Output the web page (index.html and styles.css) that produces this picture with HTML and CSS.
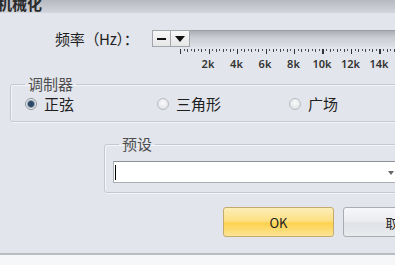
FILE: index.html
```html
<!DOCTYPE html>
<html>
<head>
    <meta charset="UTF-8">
    <title>机械化</title>
    <link rel="stylesheet" href="styles.css">
</head>
<body>
    <div class="dialog">
        <div class="caption"><span>机械化</span></div>

        <div class="freq-row">
            <span class="freq-label">频率（Hz）：</span>
            <div class="freq-control">
                <div class="freq-bar">
                    <button class="tiny-btn minus"><span></span></button>
                    <button class="tiny-btn drop"><span></span></button>
                    <div class="track"></div>
                </div>
                <div class="ticks"></div>
                <div class="scale">
                    <span>2k</span>
                    <span>4k</span>
                    <span>6k</span>
                    <span>8k</span>
                    <span>10k</span>
                    <span>12k</span>
                    <span>14k</span>
                </div>
            </div>
        </div>

        <fieldset class="group modulator">
            <legend>调制器</legend>
            <label class="radio checked"><i></i>正弦</label>
            <label class="radio"><i></i>三角形</label>
            <label class="radio"><i></i>广场</label>
        </fieldset>

        <fieldset class="group preset">
            <legend>预设</legend>
            <div class="combo">
                <span class="caret"></span>
                <span class="arrow"></span>
            </div>
        </fieldset>

        <div class="actions">
            <button class="btn ok">OK</button>
            <button class="btn">取消</button>
        </div>
    </div>
</body>
</html>
```

FILE: styles.css
```css
* {
    box-sizing: border-box;
}

body {
    margin: 0;
    width: 395px;
    height: 265px;
    overflow: hidden;
    background: #f6f7f9;
    font-family: "Noto Sans CJK SC", "Noto Sans", sans-serif;
    color: #1f1f1f;
}

.dialog {
    background: #e2e5eb;
    border-bottom: 2px solid #b9bdc3;
    padding-bottom: 16px;
}

/* title strip, cut off at the top of the shot */
.caption {
    height: 13px;
    overflow: hidden;
    background: linear-gradient(#b6b9c0, #d2d5db);
}

.caption span {
    display: block;
    margin: -5px 0 0 -3px;
    font-size: 15px;
    font-weight: 700;
    line-height: 17px;
    color: #2a2a2a;
}

.freq-row {
    display: flex;
    align-items: flex-start;
    margin-top: 17px;
    padding-left: 55px;
}

.freq-label {
    width: 97px;
    flex-shrink: 0;
    font-size: 15px;
    line-height: 18px;
    letter-spacing: -0.3px;
}

.freq-control {
    width: 260px;
    flex-shrink: 0;
}

.freq-bar {
    display: flex;
    height: 17px;
}

.tiny-btn {
    width: 19px;
    height: 17px;
    padding: 0;
    border: 1px solid #a2a5ab;
    background: linear-gradient(#f7f7f7, #e6e6e6);
    display: flex;
    align-items: center;
    justify-content: center;
}

.tiny-btn + .tiny-btn {
    border-left: none;
}

.minus span {
    width: 9px;
    height: 2px;
    background: #111;
}

.drop span {
    border-left: 5px solid transparent;
    border-right: 5px solid transparent;
    border-top: 6px solid #111;
}

.track {
    flex: 1;
    border-top: 1px solid #9c9fa5;
    background: linear-gradient(#acafb5, #c9ccd1 40%, #dde0e5);
}

.ticks {
    width: 230px;
    height: 5px;
    margin: 2px 0 0 27.5px;
    background-image:
        repeating-linear-gradient(to right, #333 0 1px, transparent 1px 28.5px),
        repeating-linear-gradient(to right, #444 0 1px, transparent 1px 7.125px),
        repeating-linear-gradient(to right, #555 0 1px, transparent 1px 3.5625px);
    background-size: 100% 5px, 100% 3px, 100% 2px;
    background-repeat: no-repeat;
}

.scale {
    display: flex;
    margin: 3px 0 0 41.75px;
}

.scale span {
    width: 28.5px;
    flex-shrink: 0;
    text-align: center;
    font-family: "Noto Sans", sans-serif;
    font-size: 11px;
    font-weight: 600;
    line-height: 13px;
    color: #333;
}

.group {
    margin: 0;
    min-width: 0;
    border: 1px solid #c4c8cf;
    border-radius: 3px;
    box-shadow: inset 1px 1px 0 #f3f5f8, 1px 1px 0 #f3f5f8;
}

.group legend {
    padding: 0 3px;
    font-size: 15px;
    line-height: 18px;
    color: #4e4e4e;
}

.modulator {
    display: flex;
    margin: 5px -30px 0 10px;
    padding: 2px 0 8px 14px;
}

.radio {
    display: flex;
    align-items: center;
    gap: 7px;
    width: 132px;
    flex-shrink: 0;
    font-size: 15px;
    line-height: 18px;
}

.radio i {
    width: 12px;
    height: 12px;
    border-radius: 50%;
    border: 1px solid #b8bbc1;
    background: radial-gradient(circle at 50% 40%, #fbfbfc, #dadce0);
}

.radio.checked i {
    border-color: #8d939c;
    background: radial-gradient(circle, #2d4866 0 2.5px, #8a9aae 3.5px, #eef0f3 4.5px);
}

.preset {
    margin: 13px -30px 0 104px;
    padding: 8px 0 9px 8px;
}

.preset legend {
    margin-left: 6px;
}

.combo {
    position: relative;
    width: 286px;
    height: 22px;
    border: 1px solid #abaeb4;
    border-top-color: #8f9298;
    background: #fff;
}

.caret {
    position: absolute;
    left: 1px;
    top: 3px;
    width: 1px;
    height: 15px;
    background: #000;
}

.arrow {
    position: absolute;
    right: 4px;
    top: 9px;
    border-left: 3px solid transparent;
    border-right: 3px solid transparent;
    border-top: 4px solid #666;
}

.actions {
    display: flex;
    gap: 9px;
    margin-top: 14px;
    padding-left: 223px;
}

.btn {
    flex: 0 0 111px;
    height: 30px;
    padding: 0;
    border: 1px solid #a9acb2;
    border-radius: 3px;
    background: linear-gradient(#f6f7f9, #eaecef 48%, #dfe2e6 52%, #e9ebee);
    font-family: "Noto Sans CJK SC", "Noto Sans", sans-serif;
    font-size: 13px;
    color: #222;
}

.btn.ok {
    border-color: #c4ab6c;
    background: linear-gradient(#fdeeb8, #fde084 45%, #fcd24e 55%, #fde497);
}
```
